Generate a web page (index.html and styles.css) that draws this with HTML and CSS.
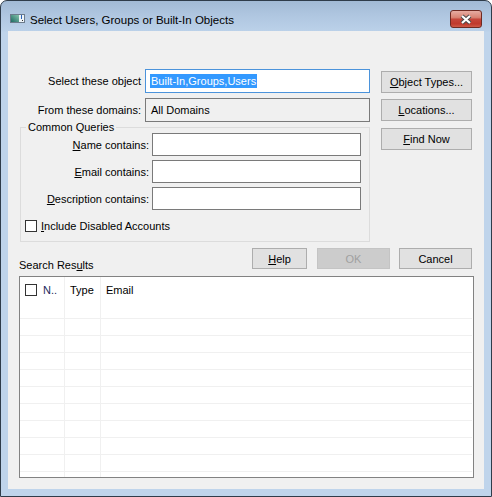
FILE: index.html
```html
<!DOCTYPE html>
<html>
<head>
<meta charset="utf-8">
<title>Select Users, Groups or Built-In Objects</title>
<link rel="stylesheet" href="styles.css">
</head>
<body>
<div class="window">
  <div class="titlebar">
    <svg class="app-icon" width="15" height="9" viewBox="0 0 15 9">
      <defs>
        <linearGradient id="ig" x1="0" y1="1" x2="1" y2="0">
          <stop offset="0" stop-color="#1d6a62"/>
          <stop offset="1" stop-color="#86c4ad"/>
        </linearGradient>
      </defs>
      <rect x="0.5" y="0.5" width="14" height="8" fill="#eef4f8" stroke="#6b7b8b"/>
      <rect x="1" y="1" width="8" height="7" fill="url(#ig)"/>
      <rect x="11" y="1" width="1" height="4" fill="#2b64b9"/>
      <rect x="12" y="6" width="1" height="1" fill="#333"/>
    </svg>
    <span class="title">Select Users, Groups or Built-In Objects</span>
    <div class="close">
      <svg width="14" height="11" viewBox="0 0 14 11">
        <path d="M3 2 L11 9 M11 2 L3 9" stroke="#4a4a4a" stroke-width="4.2" fill="none"/>
        <path d="M3 2 L11 9 M11 2 L3 9" stroke="#ffffff" stroke-width="2.2" fill="none"/>
      </svg>
    </div>
  </div>

  <div class="client">
    <div class="top">
      <div class="left">
        <div class="field-row">
          <label class="field-label">Select these object</label>
          <div class="textbox focused"><span class="selection">Built-In,Groups,Users</span></div>
        </div>
        <div class="field-row second">
          <label class="field-label">From these domains:</label>
          <div class="textbox readonly">All Domains</div>
        </div>
        <fieldset class="group">
          <legend>Common Queries</legend>
          <div class="query-grid">
            <label class="q-label"><u>N</u>ame contains:</label>
            <div class="textbox query"></div>
            <label class="q-label"><u>E</u>mail contains:</label>
            <div class="textbox query"></div>
            <label class="q-label"><u>D</u>escription contains:</label>
            <div class="textbox query"></div>
          </div>
          <div class="check-row">
            <span class="checkbox"></span>
            <span class="check-text"><u>I</u>nclude Disabled Accounts</span>
          </div>
        </fieldset>
      </div>
      <div class="right">
        <div class="btn"><u>O</u>bject Types...</div>
        <div class="btn b2"><u>L</u>ocations...</div>
        <div class="btn b3"><u>F</u>ind Now</div>
      </div>
    </div>

    <div class="results-bar">
      <span class="results-label">Search Res<u>u</u>lts</span>
      <div class="action-buttons">
        <div class="btn help"><u>H</u>elp</div>
        <div class="btn ok disabled">OK</div>
        <div class="btn cancel">Cancel</div>
      </div>
    </div>

    <div class="list">
      <div class="list-header">
        <div class="cell c1"><span class="checkbox"></span><span class="hdr-text name">N..</span></div>
        <div class="cell c2"><span class="hdr-text">Type</span></div>
        <div class="cell c3"><span class="hdr-text">Email</span></div>
      </div>
      <div class="row"><div class="cell c1"></div><div class="cell c2"></div><div class="cell c3"></div></div>
      <div class="row"><div class="cell c1"></div><div class="cell c2"></div><div class="cell c3"></div></div>
      <div class="row"><div class="cell c1"></div><div class="cell c2"></div><div class="cell c3"></div></div>
      <div class="row"><div class="cell c1"></div><div class="cell c2"></div><div class="cell c3"></div></div>
      <div class="row"><div class="cell c1"></div><div class="cell c2"></div><div class="cell c3"></div></div>
      <div class="row"><div class="cell c1"></div><div class="cell c2"></div><div class="cell c3"></div></div>
      <div class="row"><div class="cell c1"></div><div class="cell c2"></div><div class="cell c3"></div></div>
      <div class="row"><div class="cell c1"></div><div class="cell c2"></div><div class="cell c3"></div></div>
      <div class="row"><div class="cell c1"></div><div class="cell c2"></div><div class="cell c3"></div></div>
      <div class="row"><div class="cell c1"></div><div class="cell c2"></div><div class="cell c3"></div></div>
      <div class="row"><div class="cell c1"></div><div class="cell c2"></div><div class="cell c3"></div></div>
    </div>
  </div>
</div>
</body>
</html>
```

FILE: styles.css
```css
* {
  box-sizing: border-box;
}

html, body {
  margin: 0;
  padding: 0;
  background: #ffffff;
}

body {
  font-family: "Liberation Sans", Arial, sans-serif;
  font-size: 11px;
  color: #000000;
}

u {
  text-decoration: underline;
  text-underline-offset: 1px;
}

.window {
  width: 492px;
  height: 497px;
  border: 1px solid #2f3c4a;
  border-radius: 7px 7px 0 0;
  background: linear-gradient(to bottom, #a2bad5 0px, #afc6e0 14px, #bbd1e9 30px, #bfd4eb 31px, #bfd4eb 100%);
  padding: 0 7px 7px 7px;
  display: flex;
  flex-direction: column;
  overflow: hidden;
}

/* Title bar */
.titlebar {
  height: 30px;
  display: flex;
  align-items: flex-start;
  flex-shrink: 0;
}

.app-icon {
  display: block;
  margin: 13px 0 0 2px;
}

.title {
  margin: 12px 0 0 5px;
  font-size: 11.5px;
  line-height: 14px;
  color: #000;
}

.close {
  margin: 9px 2px 0 auto;
  width: 32px;
  height: 18px;
  border: 1px solid #6e2a22;
  border-radius: 3px;
  background: linear-gradient(to bottom, #e6aca2 0%, #d98474 40%, #c5463a 52%, #c0392c 80%, #cf5a47 100%);
  display: flex;
  align-items: center;
  justify-content: center;
}

.close svg {
  display: block;
}

/* Client area */
.client {
  flex: 1;
  background: #f0f0f0;
  padding: 38px 12px 0 11px;
}

.top {
  display: flex;
}

.left {
  width: 351px;
}

.field-row {
  display: flex;
  align-items: center;
  height: 24px;
}

.field-row.second {
  margin-top: 5px;
}

.field-label {
  width: 126px;
  text-align: right;
  padding-right: 4px;
  white-space: nowrap;
}

.textbox {
  border: 1px solid #7a7a7a;
  background: #ffffff;
  height: 24px;
  width: 225px;
  display: flex;
  align-items: center;
  padding-left: 5px;
  white-space: nowrap;
}

.textbox.focused {
  border-color: #4b93db;
  padding-left: 4px;
}

.selection {
  background: #3399ff;
  color: #ffffff;
  line-height: 14px;
  padding: 0 1px;
}

.textbox.readonly {
  background: #f0f0f0;
}

/* Group box */
.group {
  margin: 0 0 0 1px;
  padding: 0;
  border: 1px solid #dcdcdc;
  width: 350px;
  height: 120px;
  min-width: 0;
}

.group legend {
  margin-left: 5px;
  padding: 0 2px;
  line-height: 11px;
}

.query-grid {
  display: grid;
  grid-template-columns: 128px 209px;
  grid-auto-rows: 23px;
  column-gap: 3px;
  row-gap: 4px;
}

.q-label {
  text-align: right;
  align-self: center;
  white-space: nowrap;
}

.textbox.query {
  width: 209px;
  height: 23px;
}

.check-row {
  display: flex;
  align-items: center;
  margin: 10px 0 0 4px;
  height: 12px;
}

.checkbox {
  display: inline-block;
  width: 12px;
  height: 12px;
  border: 1px solid #333333;
  background: #ffffff;
  flex-shrink: 0;
}

.check-text {
  margin-left: 4px;
  white-space: nowrap;
}

/* Right buttons */
.right {
  margin-left: 11px;
  width: 91px;
  padding-top: 2px;
  display: flex;
  flex-direction: column;
}

.btn {
  height: 22px;
  border: 1px solid #adadad;
  background: #e1e1e1;
  display: flex;
  align-items: center;
  justify-content: center;
  white-space: nowrap;
}

.btn.b2 {
  margin-top: 6px;
}

.btn.b3 {
  margin-top: 7px;
}

/* Results bar */
.results-bar {
  display: flex;
  margin-top: 6px;
  height: 28px;
}

.results-label {
  margin-top: 11px;
  line-height: 13px;
}

.action-buttons {
  margin-left: auto;
  display: flex;
  align-items: flex-start;
}

.action-buttons .btn {
  height: 21px;
}

.btn.help {
  width: 55px;
}

.btn.ok {
  width: 73px;
  margin-left: 10px;
}

.btn.cancel {
  width: 73px;
  margin-left: 9px;
}

.btn.disabled {
  background: #cccccc;
  border-color: #c4c4c4;
  color: #a0a0a0;
}

/* List */
.list {
  width: 455px;
  height: 202px;
  border: 1px solid #828282;
  background: #ffffff;
  overflow: hidden;
}

.list-header {
  display: flex;
  height: 25px;
  width: 452px;
}

.list-header .cell {
  display: flex;
  align-items: center;
}

.row {
  display: flex;
  height: 17px;
  width: 452px;
  border-bottom: 1px solid #f0f0f0;
}

.cell.c1 {
  width: 45px;
  border-right: 1px solid #f0f0f0;
}

.cell.c2 {
  width: 36px;
  border-right: 1px solid #f0f0f0;
}

.cell.c3 {
  flex: 1;
}

.list-header .c1 .checkbox {
  margin-left: 5px;
}

.hdr-text {
  white-space: nowrap;
}

.list-header .c1 .hdr-text {
  margin-left: 6px;
  color: #1b2a5c;
}

.list-header .c2 .hdr-text,
.list-header .c3 .hdr-text {
  margin-left: 5px;
}
```
